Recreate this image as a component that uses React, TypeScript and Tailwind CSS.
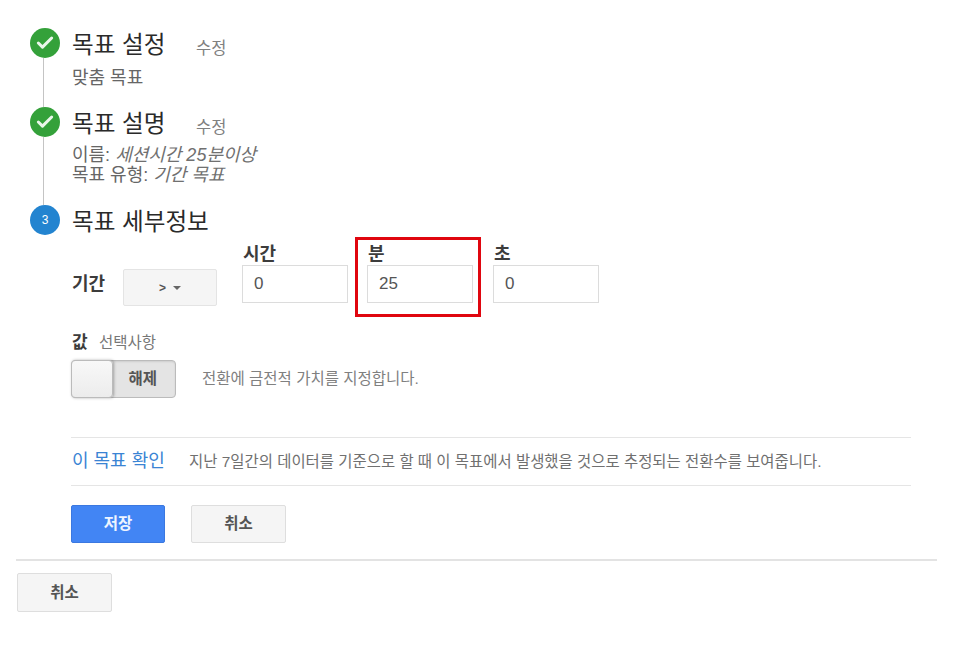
import { Check } from 'lucide-react'

const font = "font-['Liberation_Sans','Noto_Sans_CJK_KR',sans-serif]"

function StepCircle({ n }: { n?: number }) {
  if (n) {
    return (
      <div className="w-[30px] h-[30px] shrink-0 rounded-full bg-[#2384d0] text-white text-[12px] flex items-center justify-center">
        {n}
      </div>
    )
  }
  return (
    <div className="w-[30px] h-[30px] shrink-0 rounded-full bg-[#34a13a] flex items-center justify-center">
      <Check size={20} strokeWidth={3.6} className="text-[#eaf6ea]" />
    </div>
  )
}

function DoneStep({ title, children, height }: { title: string; children: React.ReactNode; height: string }) {
  return (
    <div className={`flex ${height}`}>
      <div className="w-[30px] flex flex-col">
        <StepCircle />
        <div className="flex-1 w-px ml-[13px] bg-[#c4c4c4]" />
      </div>
      <div className="ml-3">
        <div className="flex items-center h-[30px]">
          <span className="text-[23.6px] leading-[30px] mt-[3px] text-[#2a2a2a] w-[124px]">{title}</span>
          <span className="text-[16.5px] text-[#808080] mt-[10px]">수정</span>
        </div>
        {children}
      </div>
    </div>
  )
}

function TimeField({ label, value, className = '' }: { label: string; value: string; className?: string }) {
  return (
    <div className={`w-[106px] ${className}`}>
      <div className="h-[25px] pt-[1px] pl-px text-[18px] leading-[26px] font-bold text-[#3c3c3c]">{label}</div>
      <input
        readOnly
        value={value}
        className="w-full h-[38px] border border-[#dcdcdc] px-[11px] text-[17px] text-[#555] outline-none"
      />
    </div>
  )
}

function GrayButton({ children, height }: { children: React.ReactNode; height: string }) {
  return (
    <button className={`w-[95px] ${height} rounded-[2px] border border-[#dedede] bg-[#f5f5f5] text-[15.5px] font-bold text-[#555]`}>
      {children}
    </button>
  )
}

export default function App() {
  return (
    <div className={`w-[966px] h-[652px] bg-white pt-[28px] overflow-hidden ${font}`}>
      <div className="pl-[30px]">
        <DoneStep title="목표 설정" height="h-[79px]">
          <div className="text-[18px] leading-[20px] mt-[10px] text-[#666]">맞춤 목표</div>
        </DoneStep>
        <DoneStep title="목표 설명" height="h-[98px]">
          <div className="text-[18px] leading-[20px] mt-[8px] text-[#666]">
            <div>
              이름: <i className="text-[#707070]">세션시간 25분이상</i>
            </div>
            <div>
              목표 유형: <i className="text-[#707070]">기간 목표</i>
            </div>
          </div>
        </DoneStep>
        <div className="flex items-center h-[30px]">
          <StepCircle n={3} />
          <span className="ml-3 mt-[4px] text-[23.6px] leading-[30px] text-[#2a2a2a]">목표 세부정보</span>
        </div>
      </div>

      <div className="pl-[71px] w-[911px]">
        <div className="flex mt-[5px] h-[73px]">
          <div className="w-[52px] pt-[31px] pl-px text-[18px] leading-[26px] font-bold text-[#3c3c3c]">기간</div>
          <div className="w-[94px] h-[37px] mt-[29px] border border-[#e4e4e4] rounded-[2px] bg-[#f5f5f5] flex items-center justify-center gap-[7px] text-[12px] font-bold text-[#555]">
            <span>&gt;</span>
            <span className="w-0 h-0 border-x-[4px] border-x-transparent border-t-[4px] border-t-[#666]" />
          </div>
          <TimeField label="시간" value="0" className="ml-[25px]" />
          <div className="relative">
            <TimeField label="분" value="25" className="ml-[19px]" />
            <div className="absolute left-[7px] -top-[3px] w-[126px] h-[80px] border-[3px] border-[#e0060f]" />
          </div>
          <TimeField label="초" value="0" className="ml-[20px]" />
        </div>

        <div className="mt-[18px] flex items-center h-[24px]">
          <span className="text-[17px] font-bold text-[#3c3c3c] w-[28px] pl-px">값</span>
          <span className="text-[15.5px] text-[#777]">선택사항</span>
        </div>
        <div className="mt-[5px] flex items-center">
          <div className="relative w-[105px] h-[38px] rounded-[4px] border border-[#bbb] bg-[#e4e4e4] flex items-center justify-end pr-[18px] text-[15.5px] font-bold text-[#555] shadow-[inset_0_1px_2px_rgba(0,0,0,0.1)]">
            해제
            <div className="absolute -left-px -top-px w-[42px] h-[38px] rounded-[4px] border border-[#bbb] bg-linear-to-b from-[#f8f8f8] to-[#ececec] shadow-[1px_0_3px_rgba(0,0,0,0.3)]" />
          </div>
          <span className="ml-[26px] text-[15.5px] text-[#808080]">전환에 금전적 가치를 지정합니다.</span>
        </div>

        <div className="mt-[39px] h-[49px] border-y border-[#e5e5e5] flex items-center">
          <a className="pl-px text-[18px] text-[#3a84d4] w-[118px]">이 목표 확인</a>
          <span className="text-[15.45px] text-[#707070]">
            지난 7일간의 데이터를 기준으로 할 때 이 목표에서 발생했을 것으로 추정되는 전환수를 보여줍니다.
          </span>
        </div>

        <div className="mt-[19px] flex gap-[26px]">
          <button className="w-[94px] h-[38px] rounded-[2px] border border-[#3b78e0] bg-[#4285f4] text-[15.5px] font-bold text-[#eef4ff]">
            저장
          </button>
          <GrayButton height="h-[38px]">취소</GrayButton>
        </div>
      </div>

      <div className="mt-[16px] ml-[16px] w-[921px] border-t-2 border-[#e3e3e3] pt-[12px]">
        <div className="ml-px">
          <GrayButton height="h-[39px]">취소</GrayButton>
        </div>
      </div>
    </div>
  )
}
